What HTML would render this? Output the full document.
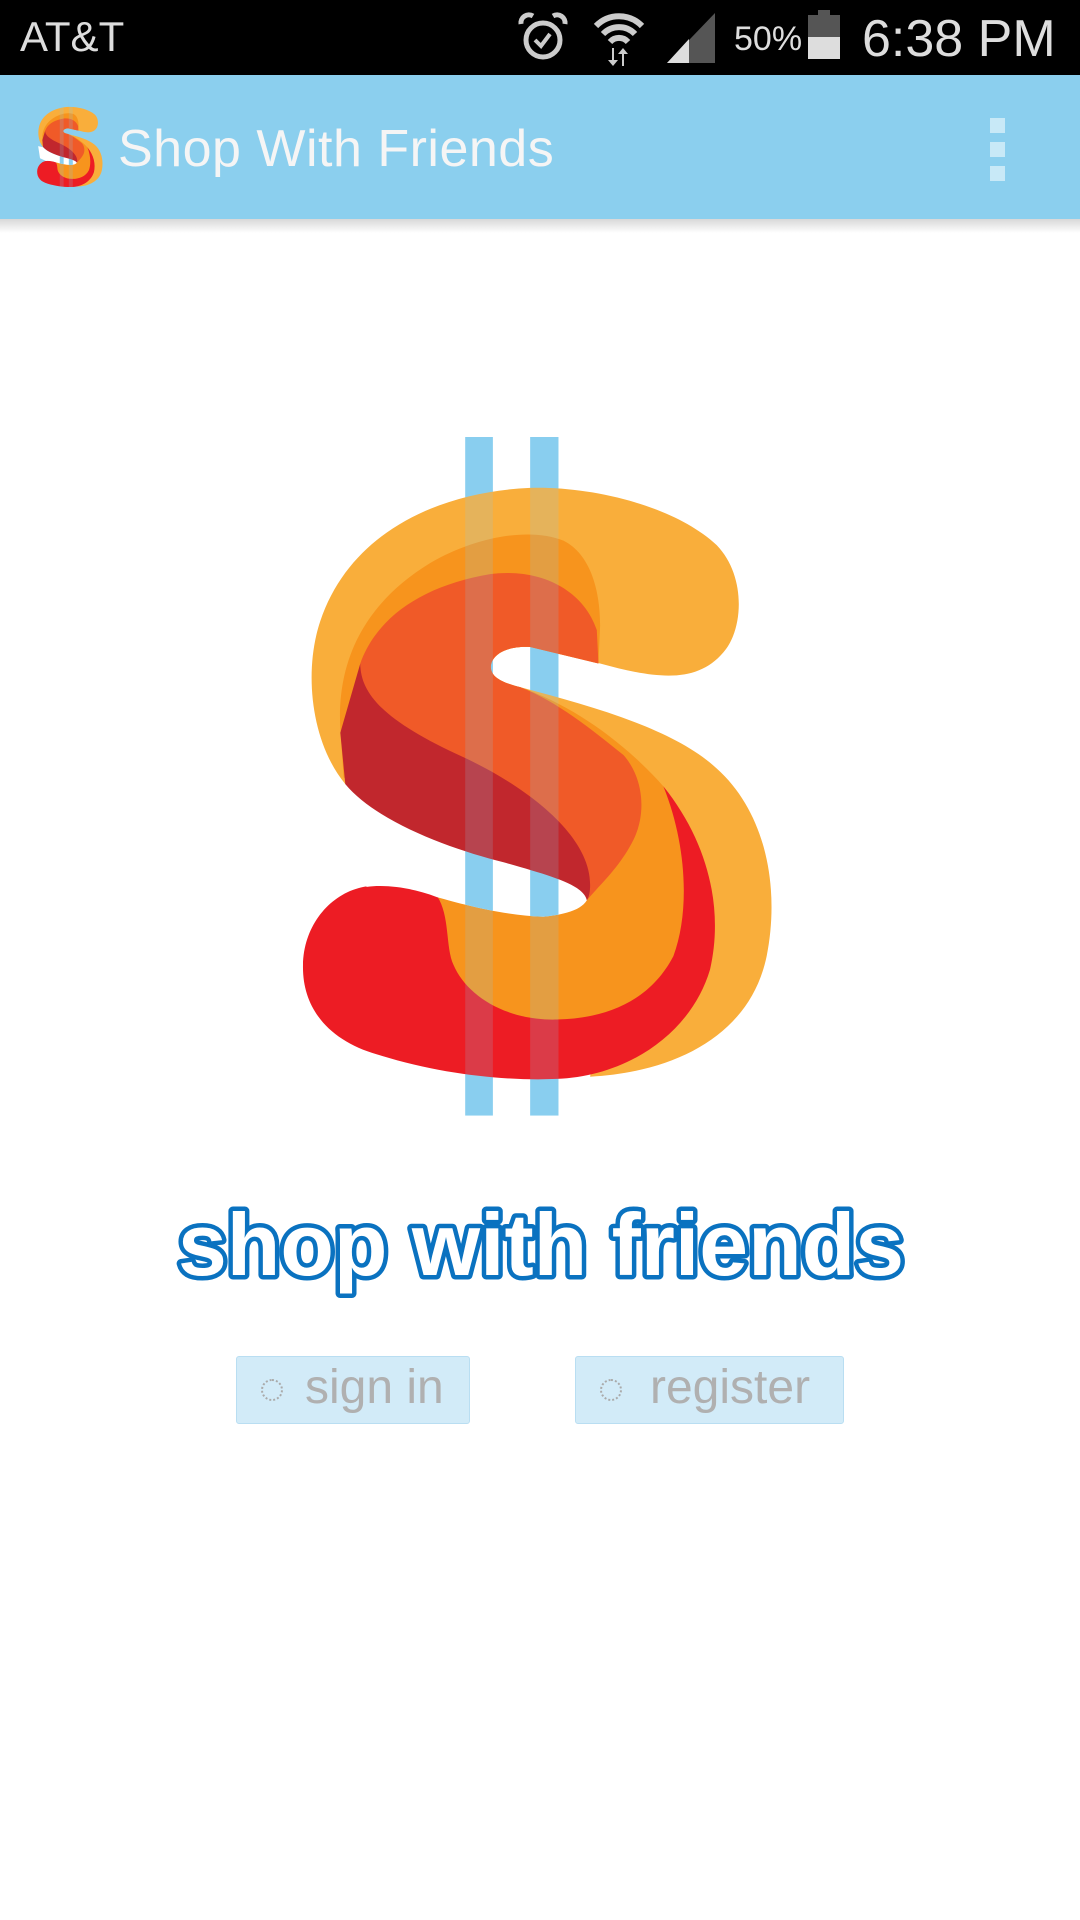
<!DOCTYPE html>
<html><head><meta charset="utf-8"><style>
html,body{margin:0;padding:0;width:1080px;height:1920px;background:#fff;overflow:hidden;font-family:"Liberation Sans",sans-serif}
.abs{position:absolute}
#sb{left:0;top:0;width:1080px;height:75px;background:#000}
#ab{left:0;top:75px;width:1080px;height:144px;background:#8bcfee}
#sh{left:0;top:219px;width:1080px;height:14px;background:linear-gradient(#d8d8d8,#fff)}
.btn{top:1356px;height:68px;background:#d2ebf8;border:1px solid #b9def2;border-radius:3px;box-sizing:border-box;color:#b0b0b0;font-size:48px;line-height:62px}
.dot{position:absolute;left:24px;top:22px;width:22px;height:22px;border:2px dotted #aaa;border-radius:50%;box-sizing:border-box}
</style></head><body>
<svg width="0" height="0" style="position:absolute">
<defs>
<symbol id="S" viewBox="35 38 1420 1520" preserveAspectRatio="none">
<clipPath id="hole"><path d="M165 818C300 920 500 960 640 985C760 1005 900 1020 898 1060C890 1090 850 1105 760 1112C650 1110 520 1085 440 1068C360 1045 280 1040 230 1045L100 1000L60 800Z"/></clipPath>
<g fill="#89cff0"><rect x="525" y="38" width="83" height="1519"/><rect x="720" y="38" width="85" height="1519"/></g>
<path fill="#f9ae3b" d="M165 815C60 720 40 560 90 450C180 250 450 160 720 152C900 148 1150 190 1280 280C1370 350 1360 470 1300 520C1220 590 1100 580 930 545L720 508C640 505 600 530 602 555C605 580 650 590 690 598C900 640 1150 690 1280 780C1430 880 1470 1050 1430 1200C1380 1380 1150 1460 900 1470L1000 1000L900 800Z"/>
<path fill="#ed1c24" d="M440 1065C350 1045 280 1035 220 1045C120 1060 40 1130 38 1220C35 1320 120 1390 260 1420C450 1465 650 1480 800 1475C1000 1470 1200 1380 1260 1230C1300 1100 1260 950 1120 820L1000 900Z"/>
<path fill="#f7941d" d="M150 690C140 560 200 420 420 320C560 260 720 240 820 270C900 300 930 380 930 460L925 545L720 508C640 505 600 530 602 555C605 580 650 590 690 598C850 640 1000 720 1120 820C1190 950 1200 1100 1150 1200C1080 1300 950 1340 800 1342C650 1345 530 1290 490 1220C465 1180 480 1110 440 1065L700 1000L160 800Z"/>
<path fill="#fff" d="M165 818C300 920 500 960 640 985C760 1005 900 1020 898 1060C890 1090 850 1105 760 1112C650 1110 520 1085 440 1068C360 1045 280 1040 230 1045L100 1000L60 800Z"/>
<g fill="#89cff0" clip-path="url(#hole)"><rect x="525" y="38" width="83" height="1519"/><rect x="720" y="38" width="85" height="1519"/></g>
<path fill="#f05a28" d="M210 545C260 440 400 370 600 345C750 330 880 380 920 470L925 545L720 508C640 505 600 530 602 555C605 580 650 590 690 598C800 630 900 690 1000 750C1060 800 1070 880 1030 940C990 1000 930 1040 890 1075L900 1040C850 950 700 860 520 760C400 710 240 660 210 590Z"/>
<path fill="#c1272d" d="M210 545C210 620 300 680 520 755C680 810 900 920 900 1040C900 1060 895 1070 890 1075C880 1040 780 1020 640 990C480 960 260 900 165 815L150 700Z"/>
<g fill="#89cff0" opacity="0.18"><rect x="525" y="38" width="83" height="1519"/><rect x="720" y="38" width="85" height="1519"/></g>
</symbol>
</defs></svg>

<div id="sb" class="abs">
  <div class="abs" style="left:20px;top:13px;font-size:42px;color:#ddd">AT&amp;T</div>
  <svg class="abs" style="left:518px;top:12px" width="50" height="52" viewBox="0 0 50 52">
    <circle cx="25" cy="28" r="17" fill="none" stroke="#ccc" stroke-width="5"/>
    <path d="M17 28l6 6 9-12" fill="none" stroke="#ccc" stroke-width="4"/>
    <path d="M3 12a8 8 0 0 1 12-8M47 12a8 8 0 0 0-12-8" fill="none" stroke="#ccc" stroke-width="5"/>
  </svg>
  <svg class="abs" style="left:592px;top:10px" width="54" height="56" viewBox="0 0 54 56">
    <path d="M4 16a32 32 0 0 1 46 0M11 24a22 22 0 0 1 32 0M18 32a12 12 0 0 1 18 0" fill="none" stroke="#ccc" stroke-width="6"/>
    <path d="M20 38v12h-4l5 6 5-6h-4V38zM32 56V44h4l-5-6-5 6h4v12z" fill="#ccc"/>
  </svg>
  <svg class="abs" style="left:667px;top:13px" width="48" height="50" viewBox="0 0 48 50"><path d="M48 0V50H0Z" fill="#555"/><path d="M22 26V50H0Z" fill="#ddd"/></svg>
  <div class="abs" style="left:734px;top:20px;font-size:34px;color:#ddd">50%</div>
  <div class="abs" style="left:808px;top:15px;width:32px;height:44px;background:#555"><div style="position:absolute;left:10px;top:-5px;width:12px;height:5px;background:#555"></div><div style="position:absolute;left:0;bottom:0;width:32px;height:22px;background:#ddd"></div></div>
  <div class="abs" style="left:862px;top:9px;font-size:52px;color:#ddd">6:38 PM</div>
</div>
<div id="ab" class="abs">
  <svg class="abs" style="left:37px;top:25px" width="66" height="92"><use href="#S" width="66" height="92"/></svg>
  <div class="abs" style="left:118px;top:44px;font-size:52px;color:#f5f5f5;letter-spacing:0.5px">Shop With Friends</div>
  <div class="abs" style="left:990px;top:43px;width:15px;height:15px;background:#c8e9f7"></div>
  <div class="abs" style="left:990px;top:67px;width:15px;height:15px;background:#c8e9f7"></div>
  <div class="abs" style="left:990px;top:91px;width:15px;height:15px;background:#c8e9f7"></div>
</div>
<div id="sh" class="abs"></div>

<svg class="abs" style="left:302px;top:437px" width="473" height="679"><use href="#S" width="473" height="679"/></svg>

<svg class="abs" style="left:0;top:1180px" width="1080" height="140">
  <text x="178" y="95" font-family="Liberation Sans, sans-serif" font-weight="bold" font-size="88" textLength="726" lengthAdjust="spacingAndGlyphs" fill="#fff" stroke="#0a72c0" stroke-width="9" stroke-linejoin="round" paint-order="stroke">shop with friends</text>
</svg>

<div class="abs btn" style="left:236px;width:234px"><span class="dot"></span><span style="position:absolute;left:68px;top:0">sign in</span></div>
<div class="abs btn" style="left:575px;width:269px"><span class="dot"></span><span style="position:absolute;left:74px;top:0">register</span></div>
</body></html>
